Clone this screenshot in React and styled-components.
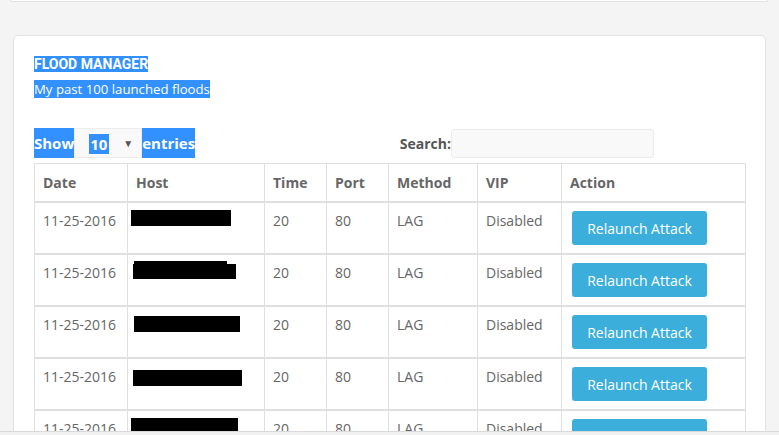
import React from "react";
import styled, { createGlobalStyle } from "styled-components";

const GlobalStyle = createGlobalStyle`
  html, body {
    margin: 0;
    padding: 0;
    overflow: hidden;
    background: #f4f4f4;
    font-family: "Open Sans", "Liberation Sans", sans-serif;
    color: #666;
  }
`;

const rows = [
  { host: [{ w: 100, h: 16, ml: -5, mt: -1 }] },
  {
    host: [
      { w: 93, h: 3, ml: -2, mt: -2 },
      { w: 103, h: 15, ml: -3, mt: 0 },
    ],
  },
  { host: [{ w: 106, h: 16, ml: -2, mt: 1 }] },
  { host: [{ w: 109, h: 16, ml: -3, mt: 3 }] },
  { host: [{ w: 107, h: 20, ml: -5, mt: -1 }] },
  { host: [{ w: 104, h: 16, ml: -4, mt: 1 }] },
];

const App = () => {
  return (
    <>
      <GlobalStyle />
      <Page>
        <TopPanel />
        <Card>
          <Title>
            <Sel>FLOOD MANAGER </Sel>
          </Title>
          <Subtitle>
            <Sel>My past 100 launched floods</Sel>
          </Subtitle>

          <Controls>
            <Length>
              <LabelSel>Show</LabelSel>
              <SelectBox>
                <SelValue>10</SelValue>
                <Arrow>▼</Arrow>
              </SelectBox>
              <LabelSel>entries</LabelSel>
            </Length>
            <SearchWrap>
              <SearchLabel>Search:</SearchLabel>
              <SearchInput type="text" />
            </SearchWrap>
          </Controls>

          <Table>
            <colgroup>
              <col style={{ width: 93 }} />
              <col style={{ width: 137 }} />
              <col style={{ width: 62 }} />
              <col style={{ width: 62 }} />
              <col style={{ width: 89 }} />
              <col style={{ width: 84 }} />
              <col style={{ width: 184 }} />
            </colgroup>
            <thead>
              <tr>
                <Th>Date</Th>
                <Th>Host</Th>
                <Th>Time</Th>
                <Th>Port</Th>
                <Th>Method</Th>
                <Th>VIP</Th>
                <Th>Action</Th>
              </tr>
            </thead>
            <tbody>
              {rows.map((r, i) => (
                <tr key={i}>
                  <Td>11-25-2016</Td>
                  <Td>
                    {r.host.map((b, j) => (
                      <Redact key={j} $w={b.w} $h={b.h} $ml={b.ml} $mt={b.mt} />
                    ))}
                  </Td>
                  <Td>20</Td>
                  <Td>80</Td>
                  <Td>LAG</Td>
                  <Td>Disabled</Td>
                  <Td>
                    <Button>Relaunch Attack</Button>
                  </Td>
                </tr>
              ))}
            </tbody>
          </Table>
        </Card>
      </Page>
      <BottomBar />
    </>
  );
};

export default App;

const Page = styled.div`
  height: 435px;
  overflow: hidden;
`;

const TopPanel = styled.div`
  height: 1px;
  margin: 0 11px 0 10px;
  background: #fff;
  border: 1px solid #e2e2e2;
  border-top: none;
  border-radius: 0 0 4px 4px;
`;

const Card = styled.div`
  margin: 33px 13px 0 13px;
  background: #fff;
  border: 1px solid #e2e2e2;
  border-radius: 5px;
  padding: 19px 20px 20px 20px;
`;

const Sel = styled.span`
  background: #3390ff;
  color: #fff;
`;

const Title = styled.div`
  font-family: Roboto, "Open Sans", sans-serif;
  font-weight: 700;
  font-size: 14px;
  line-height: 18px;
`;

const Subtitle = styled.div`
  margin-top: 8px;
  font-size: 13.2px;
  line-height: 16px;
`;

const Controls = styled.div`
  margin-top: 31px;
  display: flex;
  align-items: center;
  height: 30px;
`;

const Length = styled.div`
  display: flex;
  align-items: stretch;
  height: 30px;
`;

const LabelSel = styled.span`
  background: #3390ff;
  color: #fff;
  font-weight: 700;
  font-size: 15px;
  line-height: 30px;
`;

const SelectBox = styled.div`
  width: 68px;
  box-sizing: border-box;
  background: #f9f9f9;
  border: 1px solid #ececec;
  display: flex;
  align-items: center;
  padding: 0 8px 0 14px;
  justify-content: space-between;
`;

const SelValue = styled.span`
  background: #3390ff;
  color: #fff;
  font-weight: 700;
  font-size: 15px;
  line-height: 20px;
  padding: 0 2px 0 1px;
  margin-top: 2px;
`;

const Arrow = styled.span`
  font-size: 10px;
  color: #555;
`;

const SearchWrap = styled.div`
  margin-left: auto;
  margin-right: 91px;
  display: flex;
  align-items: center;
`;

const SearchLabel = styled.span`
  font-weight: 700;
  font-size: 14px;
  color: #555;
`;

const SearchInput = styled.input`
  width: 203px;
  height: 29px;
  box-sizing: border-box;
  margin-left: 0;
  background: #f9f9f9;
  border: 1px solid #ececec;
  border-radius: 3px;
  outline: none;
`;

const Table = styled.table`
  margin-top: 5px;
  width: 711px;
  table-layout: fixed;
  border-collapse: collapse;
`;

const Th = styled.th`
  text-align: left;
  font-weight: 700;
  font-size: 14px;
  line-height: 20px;
  color: #666;
  padding: 9px 8px 8px 8px;
  border: 1px solid #dfdfdf;
  border-bottom: 2px solid #dfdfdf;
`;

const Td = styled.td`
  vertical-align: top;
  font-size: 14px;
  line-height: 20px;
  color: #666;
  padding: 8px;
  height: 34px;
  border: 1px solid #dfdfdf;
  border-top: 2px solid #dfdfdf;
`;

const Redact = styled.span`
  display: block;
  background: #000;
  width: ${(p) => p.$w}px;
  height: ${(p) => p.$h}px;
  margin-left: ${(p) => p.$ml}px;
  margin-top: ${(p) => p.$mt}px;
`;

const Button = styled.button`
  display: block;
  margin: 0 0 0 2px;
  width: 135px;
  height: 34px;
  background: #3caedb;
  border: none;
  border-radius: 3px;
  color: #fff;
  font-family: "Open Sans", "Liberation Sans", sans-serif;
  font-size: 14px;
  padding: 0;
`;

const BottomBar = styled.div`
  position: fixed;
  left: 0;
  right: 0;
  bottom: 0;
  height: 3px;
  background: #f1f1f1;
  border-top: 1px solid #d9d9d9;
`;
